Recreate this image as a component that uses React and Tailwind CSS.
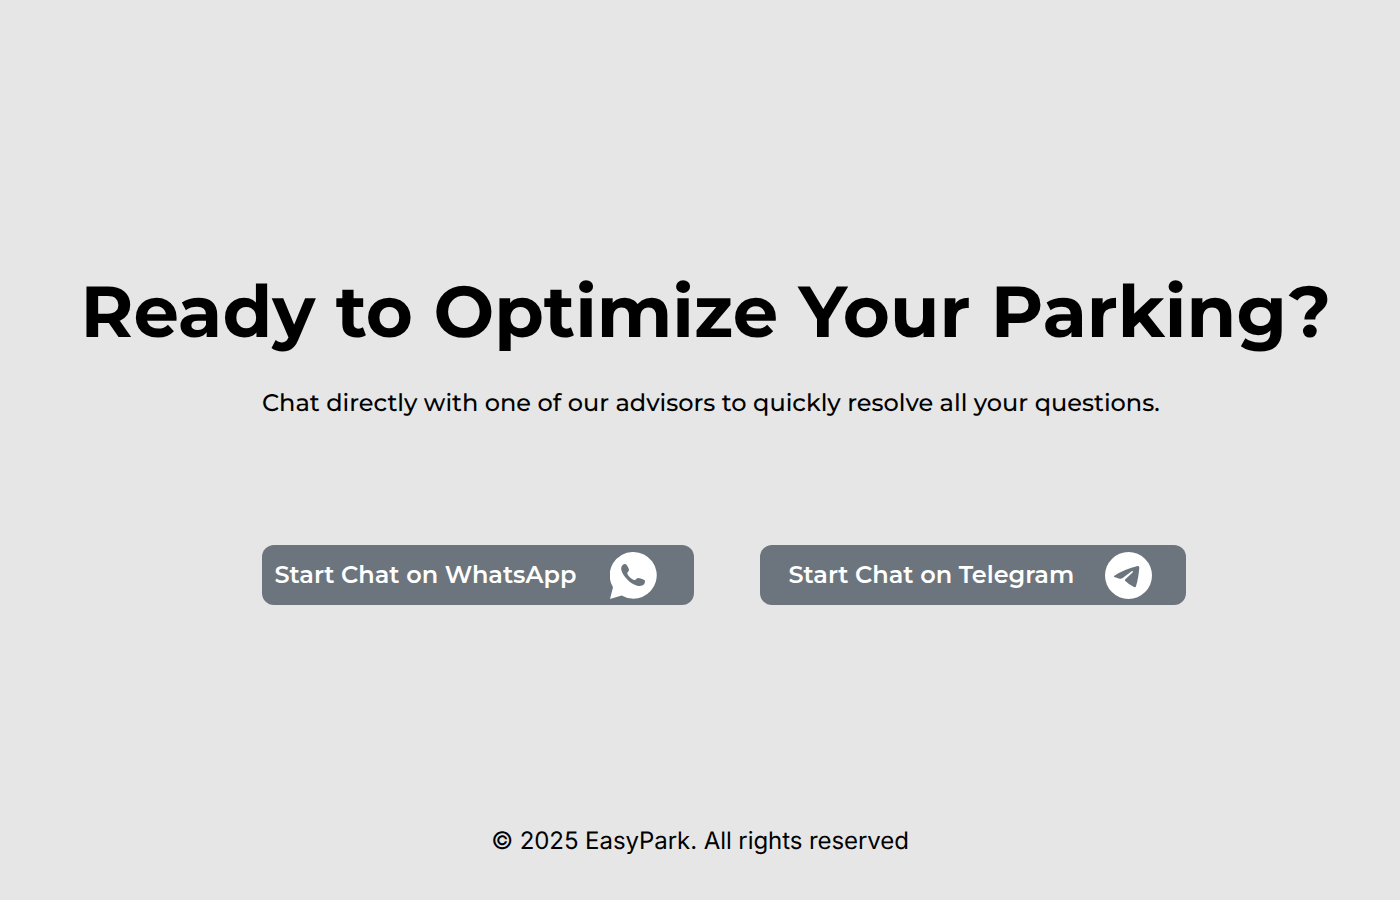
function WhatsAppIcon() {
  return (
    <svg viewBox="60 51 141 141" className="h-[47px] w-[47px] shrink-0" aria-hidden="true">
      <path
        fill="#fff"
        d="M131 51A70 70 0 1 1 95 181.500L60 192L69 157A70 70 0 0 1 131 51Z"
      />
      <path
        fill="#6c757d"
        d="M98 90C101 87 107 86 110 90C113 94 117 102 117 105C117 109 111 111 112 116C115 123 126 134 133 135C138 136 140 129 144 129C149 129 160 133 164 136C166 138 165 144 162 148C158 153 149 154 142 152C121 147 99 124 94 105C93 99 94 93 98 90Z"
      />
    </svg>
  );
}

function TelegramIcon() {
  return (
    <svg viewBox="45 51 141 141" className="h-[47px] w-[47px] shrink-0" aria-hidden="true">
      <circle cx="115.500" cy="121.500" r="70.500" fill="#fff" />
      <path
        fill="#6c757d"
        d="M73 122Q105 102 143 93Q148 92 148 98Q145 131 138 154Q137 158 132 156Q117 149 106 138Q103 136 106 133L127 113Q132 106 125 109L98 129Q94 132 89 131L73 126Q70 124 73 122Z"
      />
    </svg>
  );
}

export default function App() {
  return (
    <main className="flex h-[900px] w-[1400px] flex-col overflow-hidden bg-[#e6e6e6] font-['Montserrat','Inter',sans-serif] text-black [text-rendering:geometricPrecision]">
      <h1 className="mt-[268px] ml-[80.500px] h-[88px] w-fit text-[72px] leading-[88px] font-bold whitespace-nowrap">
        Ready to Optimize Your Parking?
      </h1>
      <p className="mt-[32px] ml-[262px] h-[32px] w-fit text-2xl leading-[32px] font-medium whitespace-nowrap">
        Chat directly with one of our advisors to quickly resolve all your questions.
      </p>
      <div className="mt-[125px] ml-[262px] flex h-[60px] gap-[66px] text-2xl font-semibold text-white">
        <button className="flex h-[60px] w-[432px] items-center justify-between rounded-xl bg-[#6c757d] pr-[37px] pl-[12.500px]">
          <span className="whitespace-nowrap">Start Chat on WhatsApp</span>
          <WhatsAppIcon />
        </button>
        <button className="flex h-[60px] w-[426px] items-center justify-between rounded-xl bg-[#6c757d] pr-[34px] pl-[28.500px]">
          <span className="whitespace-nowrap">Start Chat on Telegram</span>
          <TelegramIcon />
        </button>
      </div>
      <footer className="mt-[220px] text-center font-['Inter',sans-serif] text-[24px] leading-[32px] tracking-[-0.070px]">
        © 2025 EasyPark. All rights reserved
      </footer>
    </main>
  );
}
